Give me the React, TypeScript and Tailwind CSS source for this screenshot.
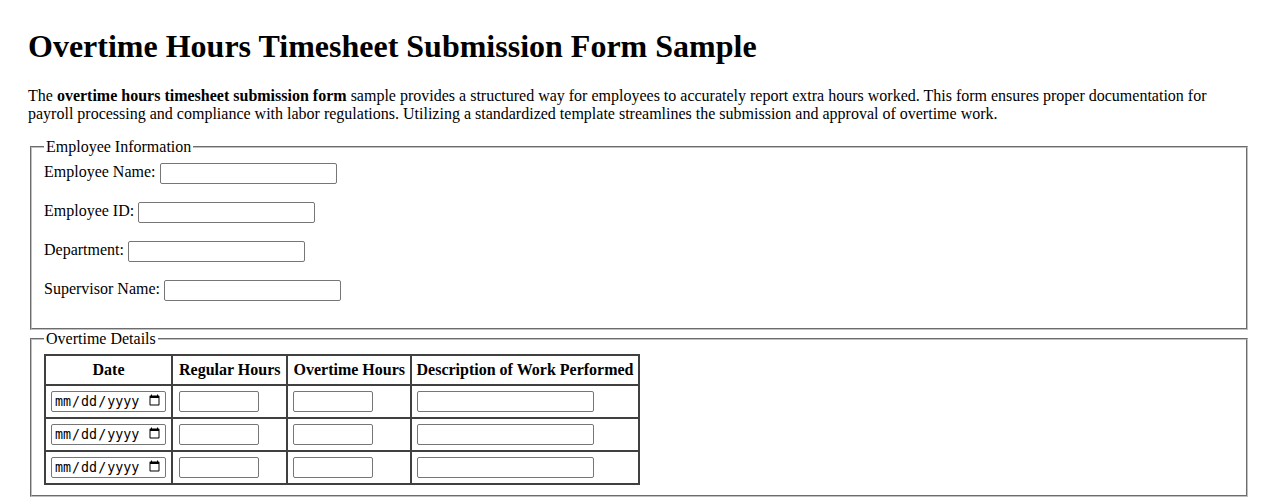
import React from "react";

const inputCls =
  "block h-[21px] border border-[#767676] rounded-[2px] bg-white px-[2px] py-[1px] text-[13.33px] font-['Liberation_Sans',Arial,sans-serif] outline-none";

function Row({ label, w = "w-[177px]" }: { label: string; w?: string }) {
  return (
    <div className="flex items-start gap-[4px] h-[23px] mb-4">
      <label className="leading-[normal]">{label}</label>
      <input type="text" className={`${inputCls} ${w}`} />
    </div>
  );
}

function DataRow() {
  const td = "border-2 border-[#404040] p-[5px] align-middle";
  return (
    <tr>
      <td className={td}>
        <input
          type="date"
          className="block h-[21px] w-[115px] border border-[#767676] rounded-[2px] bg-white px-[2px] py-[1px] text-[13.33px] font-['DejaVu_Sans_Mono',monospace] outline-none"
        />
      </td>
      <td className={`${td} px-[6px]`}>
        <input type="text" className={`${inputCls} w-[80px]`} />
      </td>
      <td className={td}>
        <input type="text" className={`${inputCls} w-[80px]`} />
      </td>
      <td className={td}>
        <input type="text" className={`${inputCls} w-[177px]`} />
      </td>
    </tr>
  );
}

export default function App() {
  const th = "border-2 border-[#404040] py-[5px] font-bold text-center leading-[normal] whitespace-nowrap";
  return (
    <div className="min-h-screen bg-white text-black font-['Liberation_Serif','Times_New_Roman',serif] text-[16px] leading-[normal] px-[28px] pt-[28px]">
      <h1 className="text-[32px] font-bold leading-[normal] mb-[22.44px]">
        Overtime Hours Timesheet Submission Form Sample
      </h1>
      <p className="mb-[15px] leading-[normal]">
        The <b>overtime hours timesheet submission form</b> sample provides a structured way for
        employees to accurately report extra hours worked. This form ensures proper documentation
        for payroll processing and compliance with labor regulations. Utilizing a standardized
        template streamlines the submission and approval of overtime work.
      </p>
      <form>
        <fieldset className="mx-[2px] border-2 [border-style:groove] border-[#c0c0c0] pt-[6.6px] px-3 pb-[9px]">
          <legend className="px-[2px] leading-[normal]">Employee Information</legend>
          <Row label="Employee Name:" />
          <Row label="Employee ID:" />
          <Row label="Department:" />
          <Row label="Supervisor Name:" />
        </fieldset>
        <fieldset className="mx-[2px] border-2 [border-style:groove] border-[#c0c0c0] pt-[5.6px] px-3 pb-[10px]">
          <legend className="px-[2px] leading-[normal]">Overtime Details</legend>
          <table className="border-collapse border-2 border-[#404040]">
            <thead>
              <tr>
                <th className={`${th} px-[5px]`}>Date</th>
                <th className={`${th} px-[6px]`}>Regular Hours</th>
                <th className={`${th} px-[5px]`}>Overtime Hours</th>
                <th className={`${th} px-[4.5px]`}>Description of Work Performed</th>
              </tr>
            </thead>
            <tbody>
              <DataRow />
              <DataRow />
              <DataRow />
            </tbody>
          </table>
        </fieldset>
      </form>
    </div>
  );
}
